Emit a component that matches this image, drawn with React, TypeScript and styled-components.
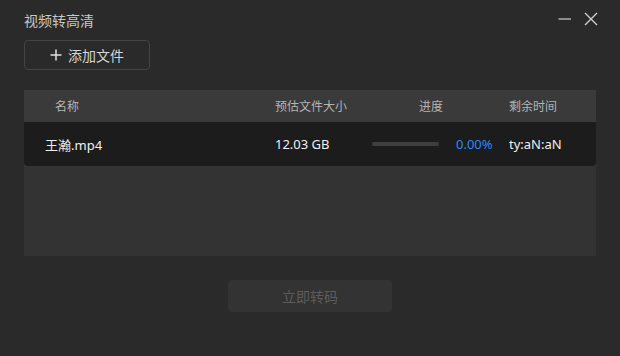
import styled, { createGlobalStyle } from "styled-components";

const Global = createGlobalStyle`
  html, body {
    margin: 0;
    padding: 0;
    background: #2a2a2a;
  }
  body {
    font-family: "Noto Sans", "Noto Sans CJK SC", sans-serif;
  }
`;

const Window = styled.div`
  width: 620px;
  height: 356px;
  background: #2a2a2a;
  box-sizing: border-box;
  padding: 0 24px;
  display: flex;
  flex-direction: column;
`;

const TitleBar = styled.div`
  height: 38px;
  display: flex;
  align-items: center;
  justify-content: space-between;
`;

const Title = styled.div`
  font-size: 14px;
  color: #c8c8c8;
  margin-top: 1px;
`;

const WinButtons = styled.div`
  display: flex;
  align-items: center;
  gap: 12px;
  margin-right: -2px;
`;

const WinButton = styled.button`
  width: 14px;
  height: 14px;
  padding: 0;
  border: none;
  background: none;
  display: flex;
  align-items: center;
  justify-content: center;
  cursor: pointer;
`;

const AddButton = styled.button`
  width: 126px;
  height: 30px;
  margin-top: 2px;
  box-sizing: border-box;
  border: 1px solid #444;
  border-radius: 4px;
  background: #2a2a2a;
  color: #d6d6d6;
  font-family: inherit;
  font-size: 14px;
  display: flex;
  align-items: center;
  justify-content: center;
  gap: 6px;
  padding: 0;
`;

const Table = styled.div`
  margin-top: 20px;
  height: 166px;
  background: #333333;
  display: flex;
  flex-direction: column;
`;

// name | size | progress | remaining
const columns = "251px 97px 137px 1fr";

const HeaderRow = styled.div`
  height: 32px;
  background: #3a3a3a;
  display: grid;
  grid-template-columns: ${columns};
  align-items: center;
  font-size: 12px;
  color: #b4b4b4;
`;

const HeadCell = styled.div<{ $pad?: number }>`
  padding-left: ${(p) => p.$pad ?? 0}px;
  white-space: nowrap;
`;

const DataRow = styled.div`
  height: 44px;
  background: #1c1c1c;
  border-radius: 0 0 4px 4px;
  display: grid;
  grid-template-columns: ${columns};
  align-items: center;
  font-size: 13px;
  color: #f0f0f0;
`;

const Cell = styled.div<{ $pad?: number }>`
  padding-left: ${(p) => p.$pad ?? 0}px;
  white-space: nowrap;
  display: flex;
  align-items: center;
`;

const Progress = styled.div`
  width: 67px;
  height: 4px;
  border-radius: 2px;
  background: #3e3e3e;
  overflow: hidden;
`;

const ProgressFill = styled.div`
  height: 100%;
  background: #2d86f5;
`;

const Percent = styled.span`
  color: #2f88f7;
  margin-left: 17px;
`;

const Footer = styled.div`
  display: flex;
  justify-content: center;
  margin-top: 24px;
`;

const StartButton = styled.button`
  width: 164px;
  height: 32px;
  border: none;
  border-radius: 4px;
  background: #333333;
  color: #5c5c5c;
  font-family: inherit;
  font-size: 14px;
  padding: 0;
`;

export default function App() {
  const progress = 0;
  return (
    <>
      <Global />
      <Window>
        <TitleBar>
          <Title>视频转高清</Title>
          <WinButtons>
            <WinButton aria-label="minimize">
              <svg width="14" height="14" viewBox="0 0 14 14">
                <line x1="0.5" y1="7" x2="13" y2="7" stroke="#cfcfcf" strokeWidth="1.2" />
              </svg>
            </WinButton>
            <WinButton aria-label="close">
              <svg width="14" height="14" viewBox="0 0 14 14">
                <path d="M1 1L13 13M13 1L1 13" stroke="#cfcfcf" strokeWidth="1.4" />
              </svg>
            </WinButton>
          </WinButtons>
        </TitleBar>

        <AddButton>
          <svg width="12" height="12" viewBox="0 0 12 12">
            <path d="M6 0.5V11.5M0.5 6H11.5" stroke="#e0e0e0" strokeWidth="1.5" />
          </svg>
          添加文件
        </AddButton>

        <Table>
          <HeaderRow>
            <HeadCell $pad={31}>名称</HeadCell>
            <HeadCell>预估文件大小</HeadCell>
            <HeadCell $pad={47}>进度</HeadCell>
            <HeadCell>剩余时间</HeadCell>
          </HeaderRow>
          <DataRow>
            <Cell $pad={21}>王瀚.mp4</Cell>
            <Cell>12.03 GB</Cell>
            <Cell>
              <Progress>
                <ProgressFill style={{ width: `${progress}%` }} />
              </Progress>
              <Percent>0.00%</Percent>
            </Cell>
            <Cell>ty:aN:aN</Cell>
          </DataRow>
        </Table>

        <Footer>
          <StartButton disabled>立即转码</StartButton>
        </Footer>
      </Window>
    </>
  );
}
